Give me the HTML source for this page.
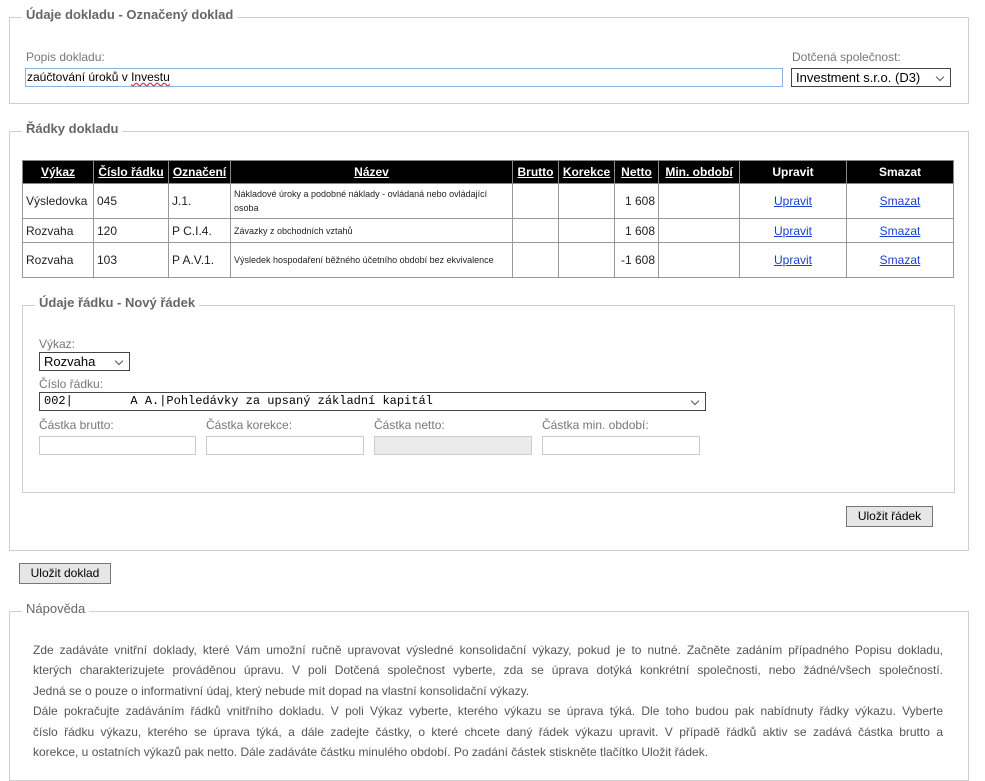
<!DOCTYPE html>
<html><head><meta charset="utf-8">
<style>
*{box-sizing:border-box;margin:0;padding:0}
body{width:985px;height:765px;background:#fff;font-family:"Liberation Sans",Arial,sans-serif;color:#333;position:relative;overflow:hidden;font-size:12px}
.a{position:absolute}
.fs{position:absolute;border:1px solid #d0d0d0}
.lg{position:absolute;background:#fff;color:#666;font-weight:bold;font-size:13px;padding:0 4px;line-height:16px}
.lbl{position:absolute;color:#777;font-size:12px;line-height:14px}
.inp{position:absolute;border:1px solid #ccc;background:#fff;height:19px}
.sel{position:absolute;border:1px solid #444;background:#fff;height:19px;font-size:13px;color:#000;line-height:17px;padding-left:4px}
.sel:after{content:"";position:absolute;right:7px;top:5px;width:5px;height:5px;border-right:1px solid #555;border-bottom:1px solid #555;transform:rotate(45deg)}
table{position:absolute;left:22px;top:160px;width:932px;border-collapse:collapse;font-size:12px;color:#222}
th{background:#000;color:#fff;font-weight:bold;text-decoration:underline;height:23px;border:1px solid #888;font-size:12px;padding:0 2px}
td{border:1px solid #999;padding:0 3px;font-size:12px}
td.s{font-size:9px;line-height:14px}
td.r{text-align:right}
td.c{text-align:center}
td a{color:#1a3fd0;text-decoration:underline}
.btn{position:absolute;background:#e6e6e6;border:1px solid #777;font-size:12px;color:#000;text-align:center;line-height:19px}
.help{position:absolute;left:33px;width:910px;color:#555;font-size:12px;line-height:20.4px}
.help div{text-align:justify;text-align-last:justify;white-space:nowrap;overflow:hidden}
.help div.l{text-align-last:left}
</style></head><body>

<div class="fs" style="left:9px;top:17px;width:960px;height:87px"></div>
<div class="lg" style="left:22px;top:7px">Údaje dokladu - Označený doklad</div>
<div class="lbl" style="left:26px;top:50px">Popis dokladu:</div>
<div class="inp" style="left:25px;top:68px;width:758px;border-color:#8fb1de;font-size:12px;color:#000;line-height:17px;padding-left:1px">zaúčtování úroků v <span style="text-decoration:underline wavy #d33">Investu</span></div>
<div class="lbl" style="left:792px;top:50px">Dotčená společnost:</div>
<div class="sel" style="left:791px;top:68px;width:160px">Investment s.r.o. (D3)</div>

<div class="fs" style="left:9px;top:131px;width:960px;height:420px"></div>
<div class="lg" style="left:22px;top:121px">Řádky dokladu</div>

<table>
<tr><th style="width:71px">Výkaz</th><th style="width:75px">Číslo řádku</th><th style="width:62px">Označení</th><th style="width:282px">Název</th><th style="width:46px">Brutto</th><th style="width:56px">Korekce</th><th style="width:44px">Netto</th><th style="width:81px">Min. období</th><th style="width:107px;text-decoration:none">Upravit</th><th style="text-decoration:none">Smazat</th></tr>
<tr style="height:35px"><td>Výsledovka</td><td>045</td><td>J.1.</td><td class="s">Nákladové úroky a podobné náklady - ovládaná nebo ovládající osoba</td><td></td><td></td><td class="r">1 608</td><td></td><td class="c"><a>Upravit</a></td><td class="c"><a>Smazat</a></td></tr>
<tr style="height:24px"><td>Rozvaha</td><td>120</td><td>P C.I.4.</td><td class="s">Závazky z obchodních vztahů</td><td></td><td></td><td class="r">1 608</td><td></td><td class="c"><a>Upravit</a></td><td class="c"><a>Smazat</a></td></tr>
<tr style="height:35px"><td>Rozvaha</td><td>103</td><td>P A.V.1.</td><td class="s">Výsledek hospodaření běžného účetního období bez ekvivalence</td><td></td><td></td><td class="r">-1 608</td><td></td><td class="c"><a>Upravit</a></td><td class="c"><a>Smazat</a></td></tr>
</table>

<div class="fs" style="left:22px;top:305px;width:933px;height:188px"></div>
<div class="lg" style="left:35px;top:295px">Údaje řádku - Nový řádek</div>
<div class="lbl" style="left:39px;top:337px">Výkaz:</div>
<div class="sel" style="left:39px;top:352px;width:91px">Rozvaha</div>
<div class="lbl" style="left:39px;top:377px">Číslo řádku:</div>
<div class="sel" style="left:39px;top:392px;width:667px;font-family:'Liberation Mono',monospace;font-size:12px;white-space:pre">002|        A A.|Pohledávky za upsaný základní kapitál</div>
<div class="lbl" style="left:39px;top:418px">Částka brutto:</div>
<div class="lbl" style="left:206px;top:418px">Částka korekce:</div>
<div class="lbl" style="left:374px;top:418px">Částka netto:</div>
<div class="lbl" style="left:542px;top:418px">Částka min. období:</div>
<div class="inp" style="left:39px;top:436px;width:157px"></div>
<div class="inp" style="left:206px;top:436px;width:158px"></div>
<div class="inp" style="left:374px;top:436px;width:158px;background:#ebebeb"></div>
<div class="inp" style="left:542px;top:436px;width:158px"></div>

<div class="btn" style="left:846px;top:506px;width:87px;height:21px">Uložit řádek</div>
<div class="btn" style="left:19px;top:563px;width:92px;height:21px">Uložit doklad</div>

<div class="fs" style="left:9px;top:611px;width:960px;height:170px"></div>
<div class="lg" style="left:22px;top:601px;font-weight:normal;color:#666">Nápověda</div>
<div class="help" style="top:640px">
<div>Zde zadáváte vnitřní doklady, které Vám umožní ručně upravovat výsledné konsolidační výkazy, pokud je to nutné. Začněte zadáním případného Popisu dokladu,</div>
<div>kterých charakterizujete prováděnou úpravu. V poli Dotčená společnost vyberte, zda se úprava dotýká konkrétní společnosti, nebo žádné/všech společností.</div>
<div class="l">Jedná se o pouze o informativní údaj, který nebude mít dopad na vlastní konsolidační výkazy.</div>
<div>Dále pokračujte zadáváním řádků vnitřního dokladu. V poli Výkaz vyberte, kterého výkazu se úprava týká. Dle toho budou pak nabídnuty řádky výkazu. Vyberte</div>
<div>číslo řádku výkazu, kterého se úprava týká, a dále zadejte částky, o které chcete daný řádek výkazu upravit. V případě řádků aktiv se zadává částka brutto a</div>
<div class="l">korekce, u ostatních výkazů pak netto. Dále zadáváte částku minulého období. Po zadání částek stiskněte tlačítko Uložit řádek.</div>
</div>
</body></html>
